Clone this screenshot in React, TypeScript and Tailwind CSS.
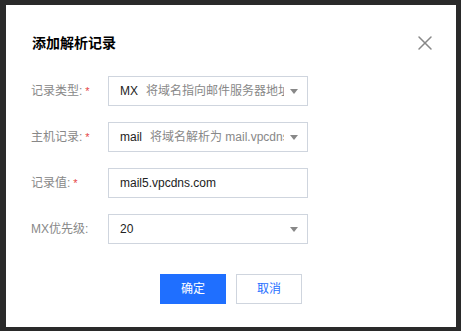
import { X } from 'lucide-react';

const font = { fontFamily: '"Liberation Sans", "Noto Sans CJK SC", sans-serif' };

const Caret = () => (
  <svg width="8" height="5" viewBox="0 0 8 5" className="shrink-0">
    <path d="M0 0 L8 0 L4 5 Z" fill="#888888" />
  </svg>
);

const Label = ({ text, required }: { text: string; required?: boolean }) => (
  <div className="w-[77px] shrink-0 text-[12px] text-[#888888] flex items-center">
    {text}
    {required && <span className="text-[#e54545] ml-[3px] text-[11px]">*</span>}
  </div>
);

const App = () => {
  return (
    <div className="w-[461px] h-[331px] bg-[#2a2a2a] pt-[5px] pl-[6px]" style={font}>
      <div className="w-[450px] h-[322px] bg-white flex flex-col px-[25px]">
        <div className="flex items-center justify-between h-[24px] mt-[26px]">
          <h1 className="text-[14px] font-bold text-black pl-[1px]">添加解析记录</h1>
          <X className="w-[24px] h-[24px] text-[#888888] mr-[-6px]" strokeWidth={1.5} />
        </div>

        <div className="flex flex-col gap-[16px] mt-[21px]">
          <div className="flex h-[30px]">
            <Label text="记录类型:" required />
            <div className="w-[200px] border border-[#cfd5de] flex items-center pl-[11px] pr-[9px] gap-[6px]">
              <div className="flex-1 flex items-center overflow-hidden whitespace-nowrap text-[12px]">
                <span className="text-[#222222] mr-[8px]">MX</span>
                <span className="text-[#888888] overflow-hidden">将域名指向邮件服务器地址</span>
              </div>
              <Caret />
            </div>
          </div>

          <div className="flex h-[30px]">
            <Label text="主机记录:" required />
            <div className="w-[200px] border border-[#cfd5de] flex items-center pl-[11px] pr-[9px] gap-[6px]">
              <div className="flex-1 flex items-center overflow-hidden whitespace-nowrap text-[12px]">
                <span className="text-[#222222] mr-[8px]">mail</span>
                <span className="text-[#888888] overflow-hidden">将域名解析为 mail.vpcdns.com</span>
              </div>
              <Caret />
            </div>
          </div>

          <div className="flex h-[30px]">
            <Label text="记录值:" required />
            <div className="w-[200px] border border-[#cfd5de] flex items-center pl-[11px] text-[12px] text-[#222222]">
              mail5.vpcdns.com
            </div>
          </div>

          <div className="flex h-[30px]">
            <Label text="MX优先级:" />
            <div className="w-[200px] border border-[#cfd5de] flex items-center pl-[11px] pr-[9px] text-[12px] text-[#222222]">
              <span className="flex-1">20</span>
              <Caret />
            </div>
          </div>
        </div>

        <div className="flex justify-center gap-[10px] mt-[30px]">
          <button className="w-[66px] h-[30px] bg-[#1f6fff] text-white text-[12px]">确定</button>
          <button className="w-[66px] h-[30px] bg-white border border-[#cfd5de] text-[#1f6fff] text-[12px]">取消</button>
        </div>
      </div>
    </div>
  );
};

export default App;
